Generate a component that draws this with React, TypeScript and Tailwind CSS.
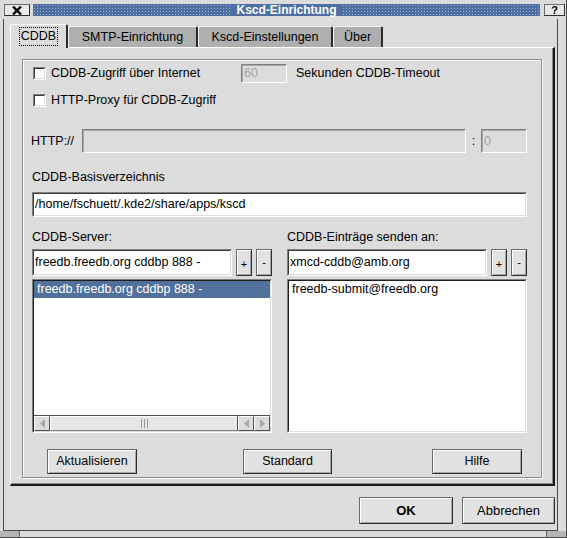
import React from "react";

const raised =
  "border border-[#6b6b6b] border-r-[#2e2e2e] border-b-[#2e2e2e] bg-[#e2e2e2] shadow-[inset_1px_1px_0_#ffffff,inset_-1px_-1px_0_#a6a6a6]";

const Checkbox = () => (
  <div className="w-[13px] h-[13px] border border-t-[#808080] border-l-[#808080] border-b-white border-r-white">
    <div className="w-full h-full bg-white border border-t-[#3a3a3a] border-l-[#3a3a3a] border-b-[#dcdcdc] border-r-[#dcdcdc]" />
  </div>
);

interface FieldProps {
  value?: string;
  disabled?: boolean;
  className?: string;
}

const Field: React.FC<FieldProps> = ({ value, disabled, className }) => (
  <div
    className={`border border-t-[#808080] border-l-[#808080] border-b-white border-r-white ${className ?? ""}`}
  >
    {disabled ? (
      <div className="h-full flex items-center px-[1px] bg-[#dcdcdc] text-[#a4a4a4] border border-t-[#a8a8a8] border-l-[#a8a8a8] border-b-[#dcdcdc] border-r-[#dcdcdc]">
        {value}
      </div>
    ) : (
      <div className="h-full flex items-center px-[1px] bg-white border border-t-[#3a3a3a] border-l-[#3a3a3a] border-b-[#dcdcdc] border-r-[#dcdcdc]">
        {value}
      </div>
    )}
  </div>
);

const Arrow = ({ dir }: { dir: "left" | "right" }) => (
  <svg width="5" height="9" viewBox="0 0 5 9">
    {dir === "left" ? (
      <polygon points="5,0 0,4.5 5,9" fill="#a8a8a8" />
    ) : (
      <polygon points="0,0 5,4.5 0,9" fill="#a8a8a8" />
    )}
  </svg>
);

const ScrollButton = ({ dir }: { dir: "left" | "right" }) => (
  <div className="w-[16px] h-full flex items-center justify-center bg-[#dcdcdc] border border-t-white border-l-white border-b-[#505050] border-r-[#505050]">
    <Arrow dir={dir} />
  </div>
);

const Scrollbar = () => (
  <div className="h-[16px] flex border-t border-[#505050] bg-[#dcdcdc]">
    <ScrollButton dir="left" />
    <div className="flex-1 flex items-center justify-center bg-[#e6e6e6] border border-t-white border-l-white border-b-[#808080] border-r-[#505050]">
      <div className="flex gap-[2px] h-[9px]">
        <div className="w-[1px] bg-[#9a9a9a]" />
        <div className="w-[1px] bg-[#9a9a9a]" />
        <div className="w-[1px] bg-[#9a9a9a]" />
      </div>
    </div>
    <ScrollButton dir="left" />
    <ScrollButton dir="right" />
  </div>
);

interface ListBoxProps {
  items: string[];
  selected?: number;
  scroll?: boolean;
}

const ListBox: React.FC<ListBoxProps> = ({ items, selected, scroll }) => (
  <div className="h-[154px] border border-t-[#808080] border-l-[#808080] border-b-white border-r-white">
    <div className="h-full flex flex-col bg-white border border-t-[#1e1e1e] border-l-[#1e1e1e] border-b-[#dcdcdc] border-r-[#dcdcdc]">
      {items.map((item, i) => (
        <div
          key={item}
          className={
            i === selected
              ? "h-[17px] flex items-center pl-[3px] bg-[#52709c] text-white"
              : "h-[17px] flex items-center pl-[3px]"
          }
        >
          {item}
        </div>
      ))}
      <div className="flex-1" />
      {scroll && <Scrollbar />}
    </div>
  </div>
);

const Combo = ({ value }: { value: string }) => (
  <div className="h-[27px] flex gap-[4px]">
    <Field value={value} className="flex-1" />
    <div className={`w-[16px] flex items-end justify-center pb-[5px] text-[11px] leading-none ${raised}`}>+</div>
    <div className={`w-[16px] flex items-center justify-center text-[11px] leading-none ${raised}`}>-</div>
  </div>
);

const Tab = ({ label, width }: { label: string; width: string }) => (
  <div
    className={`${width} h-[21px] flex items-center justify-center bg-[#afafaf] border-t border-l border-t-[#f4f4f4] border-l-[#f4f4f4] border-r-2 border-r-[#2a2a2a] rounded-tl-[3px] rounded-tr-[2px]`}
  >
    {label}
  </div>
);

export default function App() {
  return (
    <div className="w-[567px] h-[538px] flex flex-col bg-[#dcdcdc] border-r border-b border-[#4a4a4a] text-black text-[12.5px] leading-none font-['Liberation_Sans',Arial,sans-serif] overflow-hidden">
      {/* title bar */}
      <div className="h-[19px] flex items-start pt-[4px] pl-[4px] pr-[1px] gap-[2px]">
        <div className="w-[26px] h-[12px] flex items-center justify-center bg-[#e8e8e8] border border-[#6b6b6b] border-r-[#2e2e2e] border-b-[#2e2e2e]">
          <svg width="10" height="9" viewBox="0 0 10 9">
            <path d="M1 0.5 L9 8.5 M9 0.5 L1 8.5" stroke="#000" strokeWidth="2.4" />
          </svg>
        </div>
        <div className="flex-1 h-[12px] flex items-center justify-center bg-[#4f6fa3] bg-[radial-gradient(circle,#93abd2_0.7px,transparent_1px)] bg-[length:3px_3px] mx-[1px]">
          <div className="h-full flex items-center px-[4px] bg-[#4f6fa3] text-white font-bold text-[12px]">
            Kscd-Einrichtung
          </div>
        </div>
        <div className="w-[21px] h-[12px] ml-[1px] flex items-center justify-center bg-[#e8e8e8] border border-[#6b6b6b] border-r-[#2e2e2e] border-b-[#2e2e2e] font-bold text-[11px]">
          ?
        </div>
      </div>

      {/* body */}
      <div className="flex-1 flex flex-col ml-[3px] mr-[8px] border-l border-r border-b border-[#4a4a4a] pl-[6px] pr-[2px] pt-[5px]">
        {/* tabs */}
        <div className="h-[23px] flex items-end">
          <div className="relative z-10 w-[58px] h-[24px] -mb-[1px] flex items-center justify-center bg-[#dcdcdc] border-t border-l border-t-white border-l-white border-r-2 border-r-[#2a2a2a] rounded-tl-[3px] rounded-tr-[2px]">
            <span className="px-[1px] py-[2px] border border-dotted border-black">CDDB</span>
          </div>
          <Tab label="SMTP-Einrichtung" width="w-[130px]" />
          <Tab label="Kscd-Einstellungen" width="w-[135px]" />
          <Tab label="Über" width="w-[50px]" />
        </div>

        {/* tab panel */}
        <div className="h-[439px] border-t border-l border-t-white border-l-white border-r-2 border-b-2 border-r-[#1a1a1a] border-b-[#1a1a1a] shadow-[inset_-1px_-1px_0_#8a8a8a] pl-[11px] pr-[11px] pt-[11px]">
          <div className="h-[419px] flex flex-col border border-[#8c8c8c] shadow-[inset_1px_1px_0_#ffffff,1px_1px_0_#ffffff] pl-[9px] pr-[14px]">
            {/* row 1 */}
            <div className="mt-[4px] h-[19px] flex items-center">
              <div className="w-[209px] flex items-center gap-[5px] pl-[1px]">
                <Checkbox />
                <span>CDDB-Zugriff über Internet</span>
              </div>
              <Field value="60" disabled className="w-[46px] h-full" />
              <span className="ml-[9px]">Sekunden CDDB-Timeout</span>
            </div>

            {/* row 2 */}
            <div className="mt-[8px] h-[19px] flex items-center gap-[5px] pl-[1px]">
              <Checkbox />
              <span>HTTP-Proxy für CDDB-Zugriff</span>
            </div>

            {/* http row */}
            <div className="mt-[19px] h-[24px] flex items-center">
              <span className="w-[51px] -ml-[1px]">HTTP://</span>
              <Field disabled className="w-[384px] h-full" />
              <span className="w-[15px] text-center">:</span>
              <Field value="0" disabled className="flex-1 h-full" />
            </div>

            <div className="mt-[17px] h-[15px] flex items-center">CDDB-Basisverzeichnis</div>
            <Field value="/home/fschuett/.kde2/share/apps/kscd" className="mt-[7px] h-[25px]" />

            {/* lists */}
            <div className="mt-[13px] flex gap-[15px]">
              <div className="flex-1 flex flex-col">
                <div className="h-[15px] flex items-center">CDDB-Server:</div>
                <div className="mt-[4px]">
                  <Combo value="freedb.freedb.org cddbp 888 -" />
                </div>
                <div className="mt-[3px]">
                  <ListBox items={["freedb.freedb.org cddbp 888 -"]} selected={0} scroll />
                </div>
              </div>
              <div className="flex-1 flex flex-col">
                <div className="h-[15px] flex items-center">CDDB-Einträge senden an:</div>
                <div className="mt-[4px]">
                  <Combo value="xmcd-cddb@amb.org" />
                </div>
                <div className="mt-[3px]">
                  <ListBox items={["freedb-submit@freedb.org"]} />
                </div>
              </div>
            </div>

            {/* buttons */}
            <div className="mt-[16px] h-[25px] flex">
              <div className={`ml-[15px] w-[90px] flex items-center justify-center ${raised}`}>Aktualisieren</div>
              <div className={`ml-[106px] w-[89px] flex items-center justify-center ${raised}`}>Standard</div>
              <div className={`ml-[100px] w-[90px] flex items-center justify-center ${raised}`}>Hilfe</div>
            </div>
          </div>
        </div>

        {/* dialog buttons */}
        <div className="mt-[11px] h-[27px] flex justify-end gap-[9px]">
          <div className={`w-[94px] flex items-center justify-center font-bold text-[13px] ${raised}`}>OK</div>
          <div className={`w-[93px] flex items-center justify-center text-[13px] ${raised}`}>Abbrechen</div>
        </div>
      </div>

      {/* bottom frame strip */}
      <div className="h-[6px] flex">
        <div className="w-[20px] bg-[#b4b4b4] border-r border-[#6a6a6a]" />
        <div className="flex-1" />
        <div className="w-[20px] bg-[#b4b4b4] border-l border-[#6a6a6a]" />
      </div>
    </div>
  );
}
